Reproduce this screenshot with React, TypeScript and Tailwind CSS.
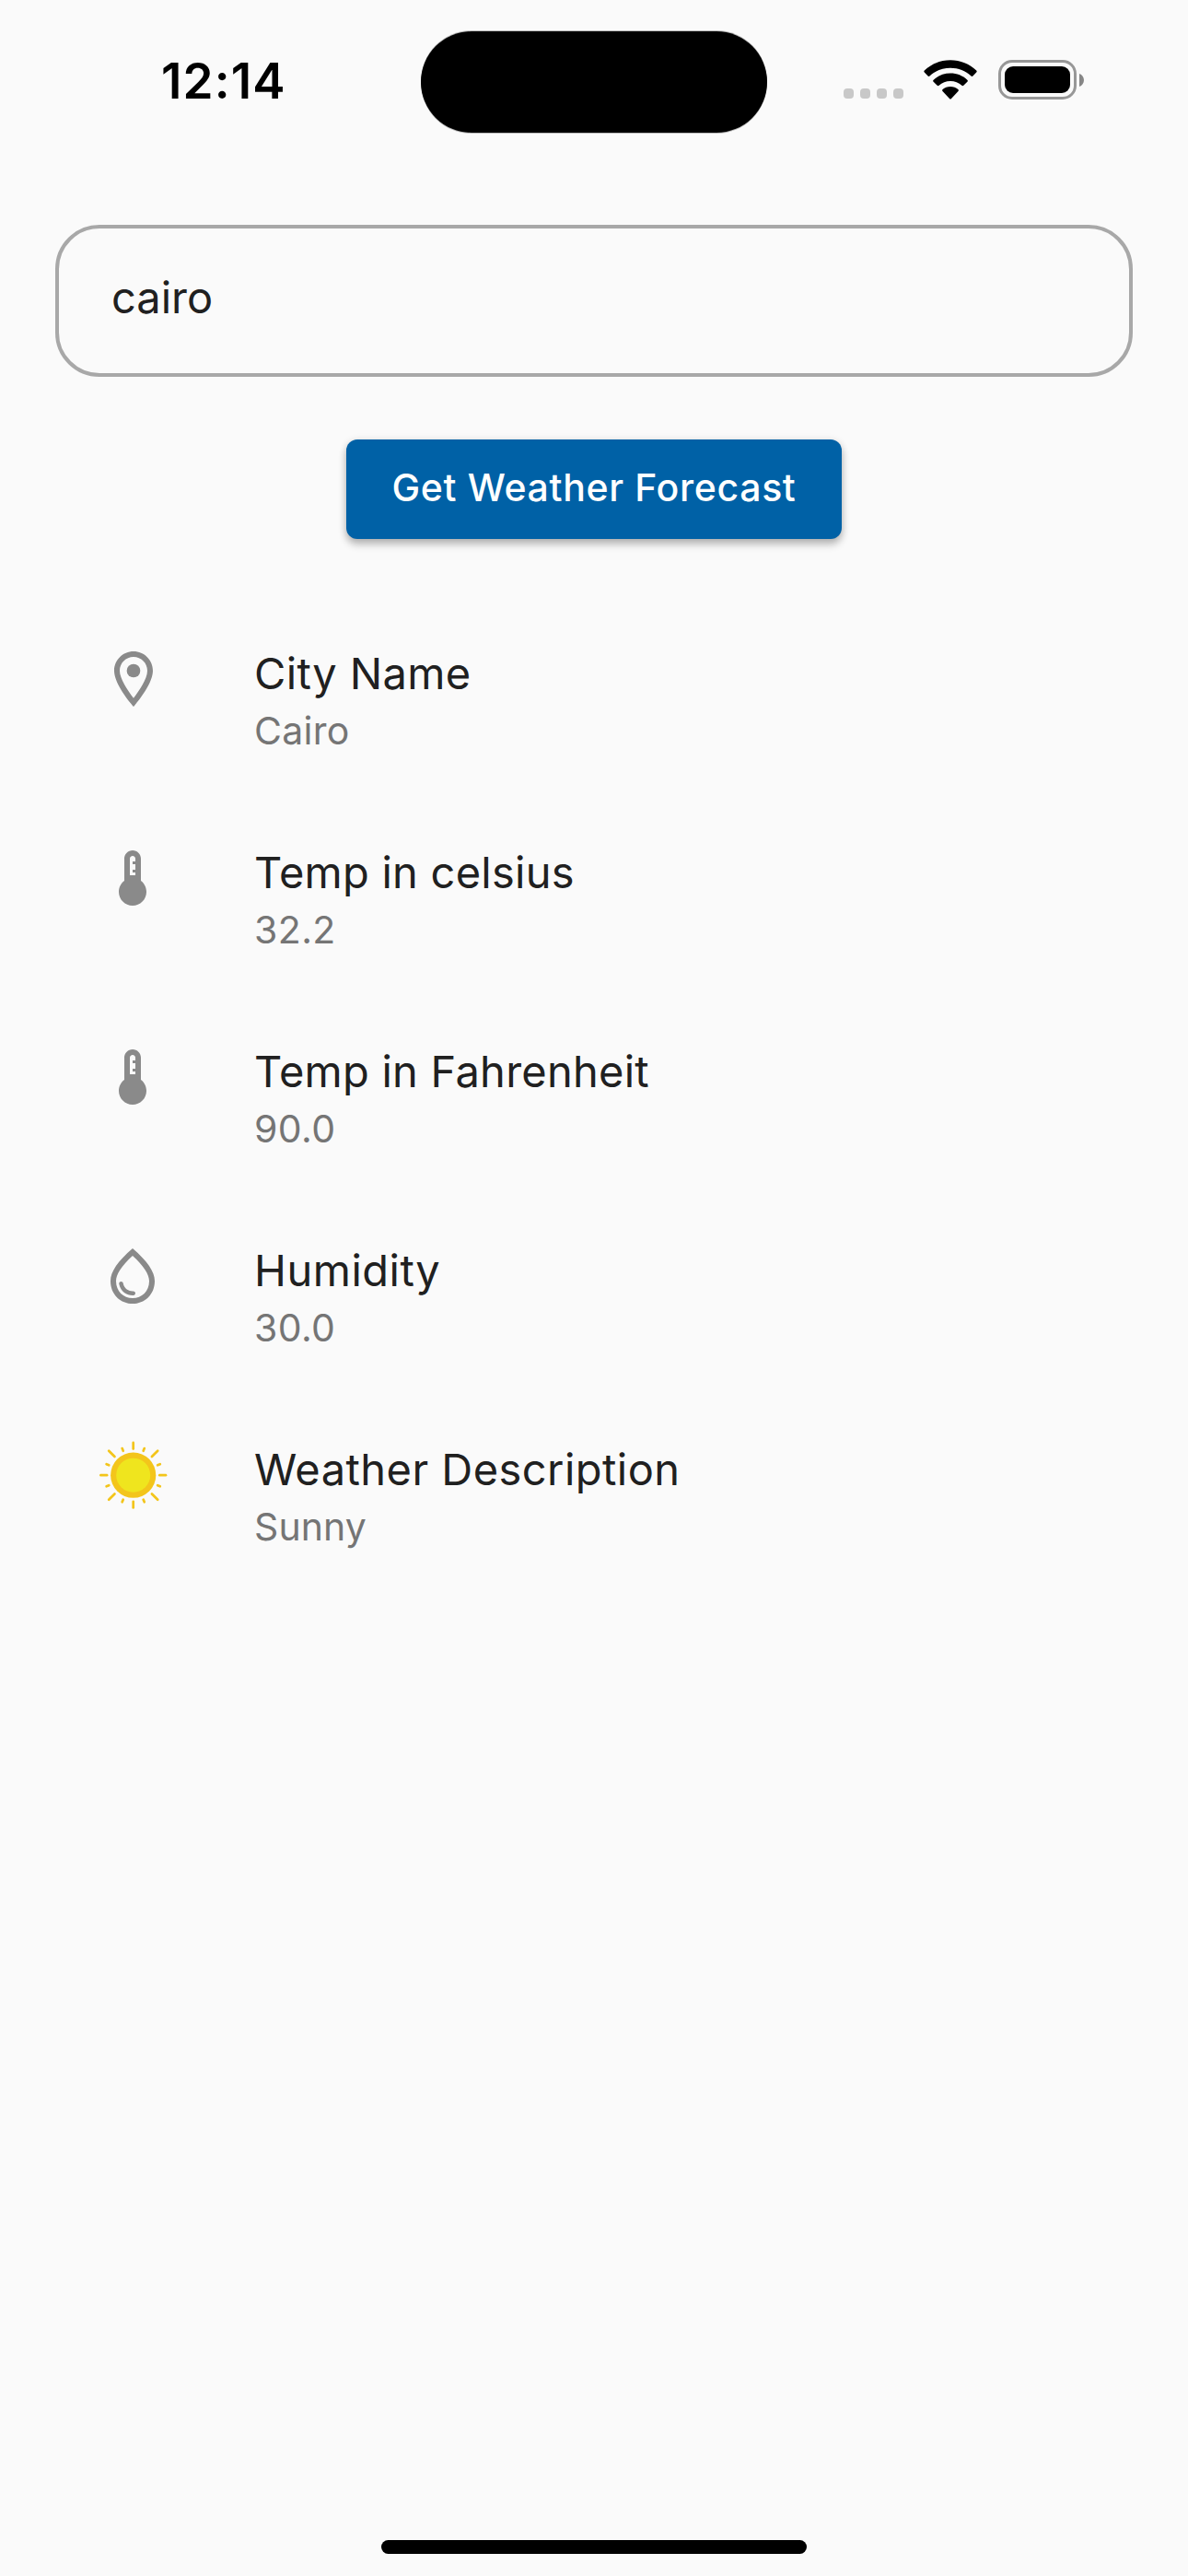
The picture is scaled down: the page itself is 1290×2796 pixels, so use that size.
import { useState, type ReactNode } from "react";

const ROW_ICON = "h-[72px] w-[72px] fill-[#8a8a8a]";

function PinIcon() {
  return (
    <svg viewBox="-0.33 0 24 24" className={ROW_ICON}>
      <path d="M12 2C8.13 2 5 5.13 5 9c0 5.25 7 13 7 13s7-7.75 7-13c0-3.87-3.13-7-7-7zM7 9c0-2.76 2.24-5 5-5s5 2.24 5 5c0 2.88-2.88 7.19-5 9.88C9.92 16.21 7 11.85 7 9z" />
      <circle cx="12" cy="9" r="2.45" />
    </svg>
  );
}

function ThermometerIcon() {
  return (
    <svg viewBox="0 0 24 24" className={ROW_ICON}>
      <path
        fillRule="evenodd"
        d="M15 13V5c0-1.66-1.34-3-3-3S9 3.34 9 5v8c-1.21.91-2 2.37-2 4 0 2.76 2.24 5 5 5s5-2.24 5-5c0-1.63-.79-3.09-2-4zM11 5c0-.55.45-1 1-1s1 .45 1 1v1h-1v1h1v2h-1v1h1v1h-2V5z"
      />
    </svg>
  );
}

function DropIcon() {
  return (
    <svg viewBox="0 0 24 24" className={ROW_ICON}>
      <path d="M12 2c-5.33 4.55-8 8.48-8 11.8 0 4.98 3.8 8.2 8 8.2s8-3.22 8-8.2c0-3.32-2.67-7.25-8-11.8zm0 18c-3.35 0-6-2.57-6-6.2 0-2.34 1.95-5.44 6-9.14 4.05 3.7 6 6.79 6 9.14 0 3.63-2.65 6.2-6 6.2zm-4.17-6c.37 0 .67.26.74.62.41 2.22 2.28 2.98 3.64 2.87.43-.02.79.32.79.75 0 .4-.32.73-.72.75-2.13.13-4.62-1.09-5.19-4.12-.08-.45.28-.87.74-.87z" />
    </svg>
  );
}

const STRAIGHT_RAYS = [0, 90, 180, 270];
const DIAGONAL_RAYS = [45, 135, 225, 315];
const SHORT_RAYS = [22.5, 67.5, 112.5, 157.5, 202.5, 247.5, 292.5, 337.5];

function SunIcon() {
  return (
    <svg viewBox="-37.7 -37.2 74 74" className="h-[74px] w-[74px] shrink-0 overflow-visible">
      <g stroke="#f3c51b" strokeWidth="2.7" strokeLinecap="round">
        {STRAIGHT_RAYS.map((a) => (
          <line key={a} x1="0" y1="-28.6" x2="0" y2="-35.3" transform={`rotate(${a})`} />
        ))}
        {DIAGONAL_RAYS.map((a) => (
          <line key={a} x1="0" y1="-28.6" x2="0" y2="-37.5" transform={`rotate(${a})`} />
        ))}
        {SHORT_RAYS.map((a) => (
          <line key={a} x1="0" y1="-28.6" x2="0" y2="-31.5" transform={`rotate(${a})`} />
        ))}
      </g>
      <circle r="24.6" fill="#f3c51b" />
      <circle r="18.5" fill="#efe51e" />
    </svg>
  );
}

function WifiIcon() {
  return (
    <svg viewBox="0 0 58 43" className="h-[43px] w-[58px]">
      <path d="M29 0.3C39.8 0.3 49.8 4.3 57.2 11.5Q58.2 12.5 57.2 13.6L53.4 17.5Q52.5 18.4 51.5 17.5C45.5 11.9 37.6 8.8 29 8.8S12.5 11.9 6.5 17.5Q5.5 18.4 4.6 17.5L0.8 13.6Q-0.2 12.5 0.8 11.5C8.2 4.3 18.2 0.3 29 0.3z" />
      <path d="M29 14.6C36 14.6 42.5 17.2 47.3 21.7Q48.4 22.7 47.4 23.7L43.3 27.7Q42.4 28.6 41.4 27.7C38 24.7 33.7 23 29 23S20 24.7 16.6 27.7Q15.6 28.6 14.7 27.7L10.6 23.7Q9.6 22.7 10.7 21.7C15.5 17.2 22 14.6 29 14.6z" />
      <path d="M29 29C32.2 29 35.2 30.1 37.4 32Q38.5 33 37.5 34L30 41.9Q29 42.9 28 41.9L20.5 34Q19.5 33 20.6 32C22.8 30.1 25.8 29 29 29z" />
    </svg>
  );
}

function StatusBar() {
  return (
    <header className="flex h-[177px] justify-between pt-[34px]">
      <div className="w-[457px] pl-[175px] pt-[23px] text-[53px] font-semibold leading-[62px] tracking-[1.1px] text-black">
        12:14
      </div>
      <div className="h-[110px] w-[376px] rounded-full bg-black shadow-[0_1px_0_rgba(0,0,0,0.25),0_-1px_0_rgba(0,0,0,0.25)]" />
      <div className="flex w-[457px] pl-[83px] pt-[31px]">
        <div className="mr-[22px] mt-[31px] flex h-[11px] gap-[7px]">
          {[0, 1, 2, 3].map((n) => (
            <span key={n} className="h-[11px] w-[11px] rounded-[4px] bg-[#c8c8c8]" />
          ))}
        </div>
        <WifiIcon />
        <div className="ml-[23px] h-[43px] w-[85px] rounded-[15px] border-[3px] border-[#979797] p-[4px]">
          <div className="h-[29px] w-[71px] rounded-[9px] bg-black" />
        </div>
        <svg viewBox="0 0 5 14" className="ml-[3px] mt-[15px] h-[14px] w-[5px] fill-[#868686]">
          <path d="M0 0C3 1 5 3.8 5 7S3 13 0 14z" />
        </svg>
      </div>
    </header>
  );
}

type RowProps = { icon: ReactNode; title: string; value: string; titleClass: string; valueClass: string };

function WeatherRow({ icon, title, value, titleClass, valueClass }: RowProps) {
  return (
    <li className="flex h-[216px]">
      <div className="flex h-[72px] w-[72px] shrink-0 items-center justify-center">{icon}</div>
      <div className="-mt-px ml-[96px] whitespace-nowrap">
        <div className={`h-[63px] text-[47px] leading-[62px] text-[#202020] ${titleClass}`}>{title}</div>
        <div className={`h-[60px] text-[41px] leading-[60px] text-[#757575] ${valueClass}`}>{value}</div>
      </div>
    </li>
  );
}

const ROWS: RowProps[] = [
  { icon: <PinIcon />, title: "City Name", value: "Cairo", titleClass: "tracking-[0.4px]", valueClass: "tracking-[0.3px]" },
  { icon: <ThermometerIcon />, title: "Temp in celsius", value: "32.2", titleClass: "tracking-[0.25px]", valueClass: "tracking-[0.4px]" },
  { icon: <ThermometerIcon />, title: "Temp in Fahrenheit", value: "90.0", titleClass: "tracking-[0.25px]", valueClass: "tracking-[0.4px]" },
  { icon: <DropIcon />, title: "Humidity", value: "30.0", titleClass: "tracking-[0.5px]", valueClass: "tracking-[0.4px]" },
  { icon: <SunIcon />, title: "Weather Description", value: "Sunny", titleClass: "tracking-[0.45px]", valueClass: "tracking-[0.1px]" },
];

export default function App() {
  const [city, setCity] = useState("cairo");
  return (
    <div className="flex h-[2796px] w-[1290px] flex-col overflow-hidden bg-[#fafafa] font-['Inter',sans-serif]">
      <StatusBar />
      <main className="flex flex-1 flex-col items-center pt-[67px]">
        <input
          value={city}
          onChange={(e) => setCity(e.target.value)}
          className="h-[165px] w-[1170px] rounded-[48px] border-4 border-[#a8a8a8] bg-transparent px-[57px] pb-[9px] text-[47px] text-[#202020] outline-none"
        />
        <button className="mt-[68px] h-[108px] w-[538px] whitespace-nowrap rounded-[12px] bg-[#0061a6] pb-[2px] text-[41px] font-medium tracking-[0.65px] text-white shadow-[0_6px_8px_rgba(0,0,0,0.24),0_1px_9px_rgba(0,0,0,0.12)]">
          Get Weather Forecast
        </button>
        <ul className="mt-[116px] w-full pl-[108px]">
          {ROWS.map((row) => (
            <WeatherRow key={row.title} {...row} />
          ))}
        </ul>
      </main>
      <footer className="flex h-[39px] justify-center">
        <div className="h-[15px] w-[462px] rounded-full bg-black" />
      </footer>
    </div>
  );
}
